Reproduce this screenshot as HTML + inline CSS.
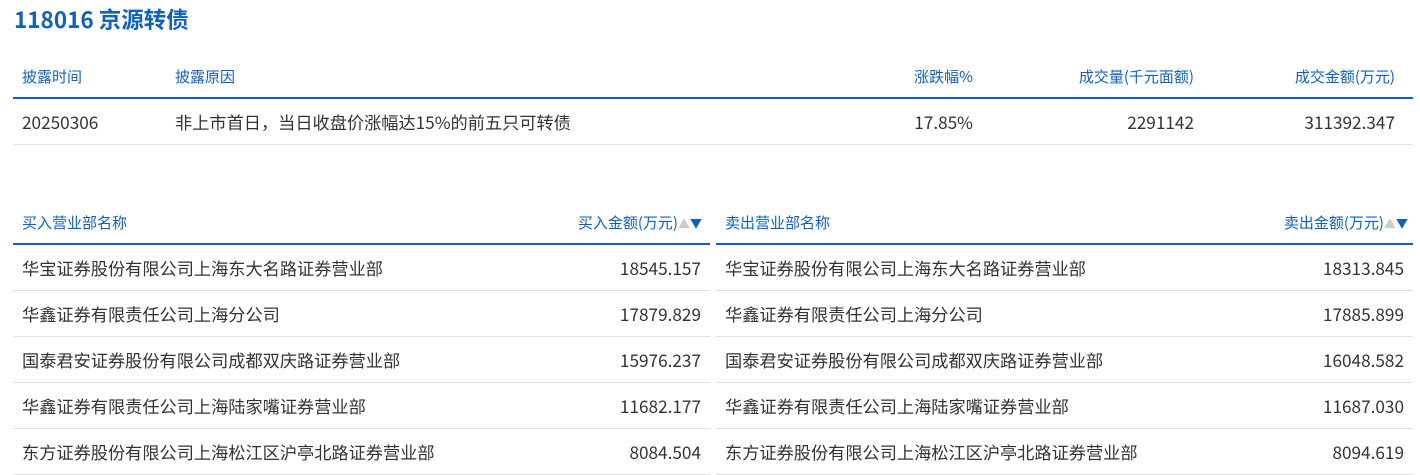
<!DOCTYPE html>
<html><head><meta charset="utf-8"><style>
body{margin:0;background:#fff;font-family:"Noto Sans CJK SC","Liberation Sans",sans-serif;color:#333;width:1420px;height:474px;overflow:hidden;position:relative}
.t{position:absolute;left:14px;top:3px;font-size:22.5px;font-weight:bold;color:#1060c0;line-height:32px}
table{position:absolute;border-collapse:collapse;table-layout:fixed}
th{font-weight:normal;color:#1060c0;font-size:15px;height:40px;border-bottom:2px solid #1060c0;padding:0 9px;vertical-align:middle;line-height:20px;white-space:nowrap}
td{font-size:17.2px;height:45px;border-bottom:1px solid #e2e2e2;padding:0 9px;vertical-align:middle;white-space:nowrap;line-height:22px}
.l{text-align:left}.r{text-align:right}
.a{color:#ccc;font-size:12px}.d{color:#1060c0;font-size:12px}
</style></head><body>
<div class="t">118016 京源转债</div>
<table style="left:13px;top:57px;width:1400px">
<colgroup><col style="width:153px"><col style="width:578px"><col style="width:238px"><col style="width:221px"><col style="width:210px"></colgroup>
<tr><th class="l">披露时间</th><th class="l">披露原因</th><th class="r">涨跌幅%</th><th class="r">成交量(千元面额)</th><th class="r" style="padding-right:18px">成交金额(万元)</th></tr>
<tr><td style="height:44px">20250306</td><td>非上市首日，当日收盘价涨幅达15%的前五只可转债</td><td class="r">17.85%</td><td class="r">2291142</td><td class="r" style="padding-right:18px">311392.347</td></tr>
</table>
<table style="left:13px;top:203px;width:697px">
<colgroup><col style="width:420px"><col></colgroup>
<tr><th class="l">买入营业部名称</th><th class="r" style="padding-right:8px">买入金额(万元)<span class="a">▲</span><span class="d">▼</span></th></tr>
<tr><td>华宝证券股份有限公司上海东大名路证券营业部</td><td class="r">18545.157</td></tr>
<tr><td>华鑫证券有限责任公司上海分公司</td><td class="r">17879.829</td></tr>
<tr><td>国泰君安证券股份有限公司成都双庆路证券营业部</td><td class="r">15976.237</td></tr>
<tr><td>华鑫证券有限责任公司上海陆家嘴证券营业部</td><td class="r">11682.177</td></tr>
<tr><td>东方证券股份有限公司上海松江区沪亭北路证券营业部</td><td class="r">8084.504</td></tr>
</table>
<table style="left:716px;top:203px;width:697px">
<colgroup><col style="width:420px"><col></colgroup>
<tr><th class="l">卖出营业部名称</th><th class="r" style="padding-right:5px">卖出金额(万元)<span class="a">▲</span><span class="d">▼</span></th></tr>
<tr><td>华宝证券股份有限公司上海东大名路证券营业部</td><td class="r">18313.845</td></tr>
<tr><td>华鑫证券有限责任公司上海分公司</td><td class="r">17885.899</td></tr>
<tr><td>国泰君安证券股份有限公司成都双庆路证券营业部</td><td class="r">16048.582</td></tr>
<tr><td>华鑫证券有限责任公司上海陆家嘴证券营业部</td><td class="r">11687.030</td></tr>
<tr><td>东方证券股份有限公司上海松江区沪亭北路证券营业部</td><td class="r">8094.619</td></tr>
</table>
</body></html>
